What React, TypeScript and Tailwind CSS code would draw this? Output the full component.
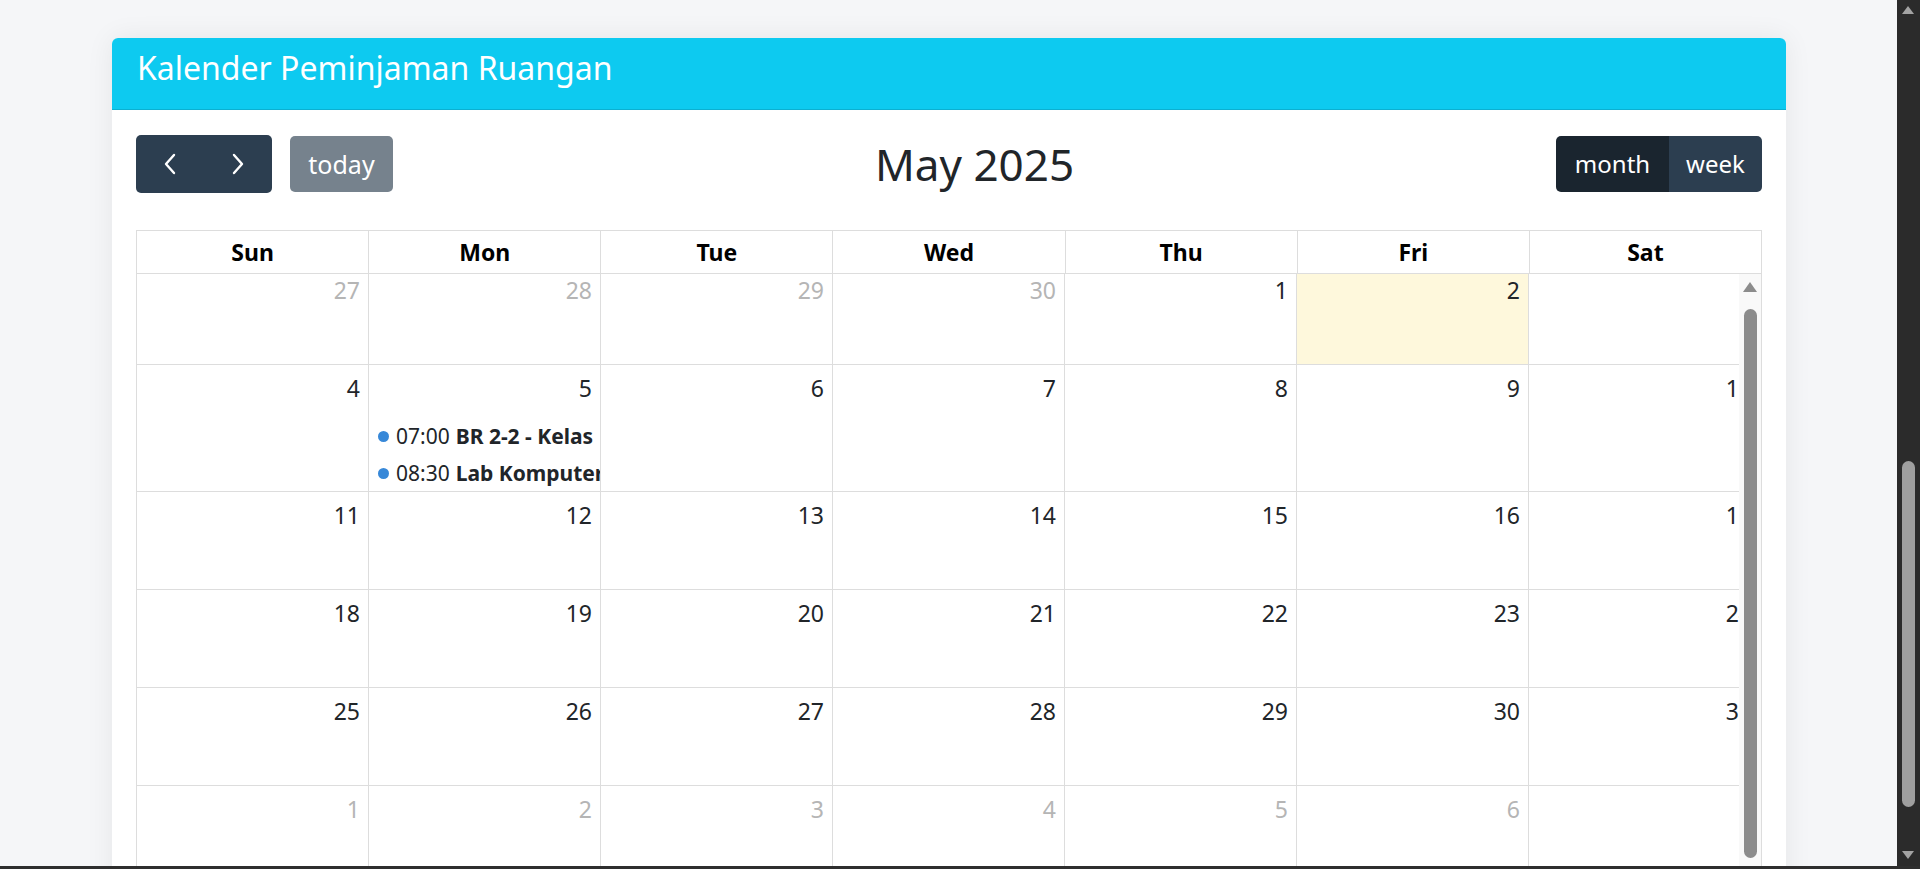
import React from "react";

type Day = { n: number; other?: boolean; today?: boolean };

const WEEKDAYS = ["Sun", "Mon", "Tue", "Wed", "Thu", "Fri", "Sat"];

const WEEKS: Day[][] = [
  [
    { n: 27, other: true },
    { n: 28, other: true },
    { n: 29, other: true },
    { n: 30, other: true },
    { n: 1 },
    { n: 2, today: true },
    { n: 3 },
  ],
  [4, 5, 6, 7, 8, 9, 10].map((n) => ({ n })),
  [11, 12, 13, 14, 15, 16, 17].map((n) => ({ n })),
  [18, 19, 20, 21, 22, 23, 24].map((n) => ({ n })),
  [25, 26, 27, 28, 29, 30, 31].map((n) => ({ n })),
  [1, 2, 3, 4, 5, 6, 7].map((n) => ({ n, other: true })),
];

const EVENTS: Record<number, { time: string; title: string }[]> = {
  5: [
    { time: "07:00", title: "BR 2-2 - Kelas" },
    { time: "08:30", title: "Lab Komputer" },
  ],
};

function Chevron({ dir }: { dir: "left" | "right" }) {
  return (
    <svg width="14" height="22" viewBox="0 0 14 22" fill="none">
      <path
        d={dir === "left" ? "M11 2 L3 11 L11 20" : "M3 2 L11 11 L3 20"}
        stroke="white"
        strokeWidth="2.4"
        strokeLinecap="round"
        strokeLinejoin="round"
      />
    </svg>
  );
}

export default function App() {
  return (
    <div className="h-[869px] w-full overflow-hidden flex flex-col font-['Noto_Sans',sans-serif]">
      <div className="flex h-[866px]">
        {/* page */}
        <div className="flex-1 bg-[#f5f6f8] pt-[38px] pl-[112px] pr-[111px] overflow-hidden">
          <div className="bg-white rounded-t-md shadow-[0_0_28px_rgba(0,0,0,0.07)] h-[900px] flex flex-col">
            <div className="h-[72px] bg-[#0dcaf0] rounded-t-md border-b border-[#0bb0d1] pl-[25px] pt-[14px]">
              <h1 className="text-[32px] leading-none text-white">Kalender Peminjaman Ruangan</h1>
            </div>

            <div className="px-6 pt-[25px] flex-1 flex flex-col">
              {/* toolbar */}
              <div className="flex items-center justify-between mb-[37px]">
                <div className="flex items-center gap-[18px]">
                  <div className="flex h-[58px] rounded-[5px] overflow-hidden bg-[#2c3e50]">
                    <button className="w-[68px] flex items-center justify-center">
                      <Chevron dir="left" />
                    </button>
                    <button className="w-[68px] flex items-center justify-center">
                      <Chevron dir="right" />
                    </button>
                  </div>
                  <button className="h-[56px] w-[103px] rounded-[5px] bg-[#76828d] text-white text-[25px] leading-none">
                    today
                  </button>
                </div>
                <h2 className="text-[44px] leading-none text-[#212529]">May 2025</h2>
                <div className="flex h-[56px] rounded-[5px] overflow-hidden text-white text-[24px] leading-none">
                  <button className="w-[113px] bg-[#1a252f]">month</button>
                  <button className="w-[93px] bg-[#2c3e50]">week</button>
                </div>
              </div>

              {/* calendar grid */}
              <div className="border-l border-t border-[#dddddd] flex-1 flex flex-col">
                <div className="grid grid-cols-7 h-[43px] border-b border-[#dddddd]">
                  {WEEKDAYS.map((d) => (
                    <div
                      key={d}
                      className="border-r border-[#dddddd] flex items-center justify-center text-[23px] font-bold text-black"
                    >
                      {d}
                    </div>
                  ))}
                </div>

                <div className="relative flex-1 overflow-hidden border-r border-[#dddddd]">
                  <div className="-mt-[7px]">
                    {WEEKS.map((week, wi) => (
                      <div
                        key={wi}
                        className={`grid grid-cols-7 border-b border-[#dddddd] ${wi === 1 ? "h-[127px]" : "h-[98px]"}`}
                      >
                        {week.map((day, di) => (
                          <div
                            key={di}
                            className={`border-r border-[#dddddd] flex flex-col min-w-0 overflow-hidden ${day.today ? "bg-[#fef8dc]" : ""}`}
                          >
                            <div
                              className={`pt-[12px] pr-[8px] text-right text-[23px] leading-none ${day.other ? "text-[#b5b5b5]" : "text-[#212529]"}`}
                            >
                              {day.n}
                            </div>
                            {!day.other && wi === 1 && EVENTS[day.n] && (
                              <div className="mt-[18px] pl-[9px]">
                                {EVENTS[day.n].map((ev) => (
                                  <div
                                    key={ev.time}
                                    className="h-[37px] flex items-center whitespace-nowrap text-[21px] text-[#212529]"
                                  >
                                    <span className="w-[11px] h-[11px] rounded-full bg-[#3788d8] shrink-0 mr-[7px]" />
                                    <span>{ev.time}</span>
                                    <span className="font-bold ml-[6px]">{ev.title}</span>
                                  </div>
                                ))}
                              </div>
                            )}
                          </div>
                        ))}
                      </div>
                    ))}
                  </div>

                  {/* inner scrollbar */}
                  <div className="absolute top-0 right-0 bottom-0 w-[22px] bg-[#f9f9f9]">
                    <div className="absolute top-[8px] left-[4px] w-0 h-0 border-l-[7px] border-r-[7px] border-b-[10px] border-l-transparent border-r-transparent border-b-[#8c8c8c]" />
                    <div className="absolute top-[35px] left-[5px] w-[13px] h-[549px] rounded-full bg-[#8c8c8c]" />
                  </div>
                </div>
              </div>
            </div>
          </div>
        </div>

        {/* browser scrollbar */}
        <div className="relative w-[23px] bg-[#2b2b2b]">
          <div className="absolute top-[6px] left-[5px] w-0 h-0 border-l-[6px] border-r-[6px] border-b-[8px] border-l-transparent border-r-transparent border-b-[#a3a3a3]" />
          <div className="absolute top-[461px] left-[5px] w-[13px] h-[346px] rounded-full bg-[#9f9f9f]" />
          <div className="absolute top-[851px] left-[5px] w-0 h-0 border-l-[6px] border-r-[6px] border-t-[8px] border-l-transparent border-r-transparent border-t-[#a3a3a3]" />
        </div>
      </div>
      <div className="h-[3px] bg-[#2e2e2e]" />
    </div>
  );
}
